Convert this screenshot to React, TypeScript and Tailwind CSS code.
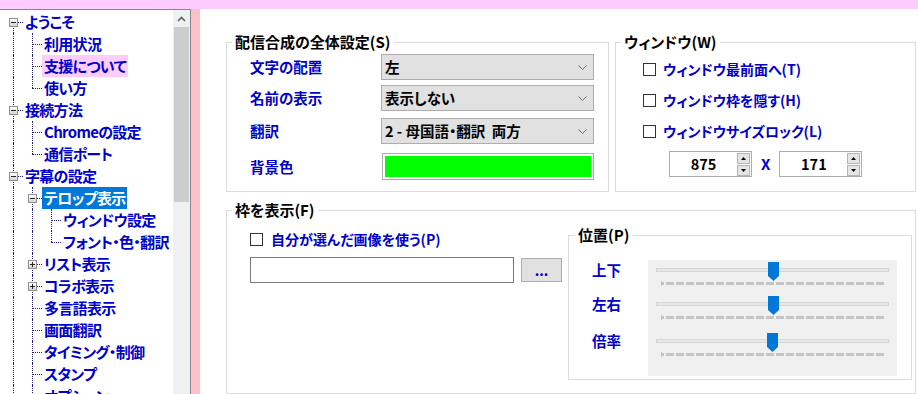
import React from "react";

type Seg = "I" | "T" | "L" | "F";
type Row = { label: string; cols: Seg[]; box?: "-" | "+"; sel?: boolean; pink?: boolean };

const rows: Row[] = [
  { label: "ようこそ", cols: ["F"], box: "-" },
  { label: "利用状況", cols: ["I", "T"] },
  { label: "支援について", cols: ["I", "T"], pink: true },
  { label: "使い方", cols: ["I", "L"] },
  { label: "接続方法", cols: ["T"], box: "-" },
  { label: "Chromeの設定", cols: ["I", "T"] },
  { label: "通信ポート", cols: ["I", "L"] },
  { label: "字幕の設定", cols: ["T"], box: "-" },
  { label: "テロップ表示", cols: ["I", "T"], box: "-", sel: true },
  { label: "ウィンドウ設定", cols: ["I", "I", "T"] },
  { label: "フォント・色・翻訳", cols: ["I", "I", "L"] },
  { label: "リスト表示", cols: ["I", "T"], box: "+" },
  { label: "コラボ表示", cols: ["I", "T"], box: "+" },
  { label: "多言語表示", cols: ["I", "T"] },
  { label: "画面翻訳", cols: ["I", "T"] },
  { label: "タイミング・制御", cols: ["I", "T"] },
  { label: "スタンプ", cols: ["I", "T"] },
  { label: "オプション", cols: ["I", "T"] },
];

function Cell({ seg, box }: { seg: Seg; box?: "-" | "+" }) {
  return (
    <div className="relative w-[19px] h-[22px] shrink-0">
      {(seg === "I" || seg === "T") && (
        <div className="absolute left-[9px] top-0 h-[22px] border-l border-dotted border-[#1c1c7a]" />
      )}
      {seg === "L" && (
        <div className="absolute left-[9px] top-0 h-[11px] border-l border-dotted border-[#1c1c7a]" />
      )}
      {seg === "F" && (
        <div className="absolute left-[9px] top-[11px] h-[11px] border-l border-dotted border-[#1c1c7a]" />
      )}
      {seg !== "I" && (
        <div className="absolute left-[9px] right-0 top-[11px] border-t border-dotted border-[#1c1c7a]" />
      )}
      {box && (
        <div className="absolute left-[5px] top-[7px] w-[9px] h-[9px] border border-[#8f8f8f] bg-linear-to-b from-white to-[#d4d4d4]">
          <div className="absolute left-[1px] top-[3px] w-[5px] h-[1px] bg-[#222]" />
          {box === "+" && <div className="absolute left-[3px] top-[1px] w-[1px] h-[5px] bg-[#222]" />}
        </div>
      )}
    </div>
  );
}

function Tree() {
  return (
    <div className="w-[191px] shrink-0 border-t border-r border-[#828790] flex bg-white">
      <div className="flex-1 overflow-hidden pt-[1px] pl-[4px]">
        {rows.map((r, i) => (
          <div key={i} className="flex h-[22px] items-center">
            {r.cols.map((s, j) => (
              <Cell key={j} seg={s} box={j === r.cols.length - 1 ? r.box : undefined} />
            ))}
            <div
              className={
                "px-[2px] h-[22px] leading-[22px] whitespace-nowrap text-[15px] tracking-[-0.7px] font-bold " +
                (r.sel
                  ? "bg-[#0078d7] text-white"
                  : r.pink
                  ? "bg-[#ffccff] text-[#0000c8]"
                  : "text-[#0000c8]")
              }
            >
              {r.label}
            </div>
          </div>
        ))}
      </div>
      <div className="w-[17px] shrink-0 bg-[#f0f0f0] flex flex-col">
        <div className="h-[17px] flex items-center justify-center">
          <svg width="9" height="6" viewBox="0 0 9 6">
            <polyline points="1,5 4.5,1.5 8,5" fill="none" stroke="#606060" strokeWidth="1.6" />
          </svg>
        </div>
        <div className="mx-[1px] h-[175px] bg-[#cdcdcd]" />
      </div>
    </div>
  );
}

function Chevron() {
  return (
    <svg width="9" height="5" viewBox="0 0 9 5">
      <polyline points="0.5,0.5 4.5,4.5 8.5,0.5" fill="none" stroke="#707070" strokeWidth="1" />
    </svg>
  );
}

function Combo({ text }: { text: string }) {
  return (
    <div className="w-[213px] h-[26px] bg-[#e1e1e1] border border-[#adadad] flex items-center justify-between pl-[3px] pr-[6px] text-black text-[14.5px] font-bold whitespace-pre">
      <span>{text}</span>
      <Chevron />
    </div>
  );
}

function Check({ label, gap = "gap-[7px]" }: { label: string; gap?: string }) {
  return (
    <div className={"flex items-center h-[20px] " + gap}>
      <div className="w-[13px] h-[13px] border border-[#333] bg-white shrink-0" />
      <span className="text-[#0000c8] text-[14px] font-bold whitespace-nowrap">{label}</span>
    </div>
  );
}

function Spinner({ value }: { value: string }) {
  return (
    <div className="w-[83px] h-[26px] border border-[#adadad] bg-white flex">
      <div className="flex-1 flex items-center justify-center text-black text-[14.5px] font-bold">{value}</div>
      <div className="w-[13px] mr-[1px] mt-[1px] flex flex-col gap-[1px]">
        <div className="h-[11px] bg-[#e5e5e5] border border-[#b5b5b5] flex items-center justify-center">
          <svg width="5" height="3" viewBox="0 0 5 3">
            <polygon points="0,3 2.5,0 5,3" fill="#000" />
          </svg>
        </div>
        <div className="h-[11px] bg-[#e5e5e5] border border-[#b5b5b5] flex items-center justify-center">
          <svg width="5" height="3" viewBox="0 0 5 3">
            <polygon points="0,0 2.5,3 5,0" fill="#000" />
          </svg>
        </div>
      </div>
    </div>
  );
}

function Slider({ tx }: { tx: number }) {
  return (
    <svg width="249" height="34" viewBox="0 0 249 34" className="block">
      <rect x="8.5" y="8.5" width="232" height="3" fill="#e7e7e7" stroke="#d6d6d6" />
      <line x1="13" x2="237" y1="23.5" y2="23.5" stroke="#c4c4c4" strokeWidth="3" strokeDasharray="8 2" strokeDashoffset="5" />
      <rect x="13" y="21" width="1" height="5" fill="#c4c4c4" />
      <path d={`M${tx} 2 h11 v14 l-5.5 5 l-5.5 -5 z`} fill="#0078d7" />
    </svg>
  );
}

function Legend({ text, ml = "ml-[5px]" }: { text: string; ml?: string }) {
  return (
    <legend className={ml + " px-[3px] text-[15px] font-bold leading-[20px] text-black whitespace-nowrap"}>
      {text}
    </legend>
  );
}

const LBL = "text-[#0000c8] text-[14.5px] font-bold";

export default function App() {
  return (
    <div className="w-[918px] h-[394px] overflow-hidden flex flex-col bg-white font-['Noto_Sans_CJK_JP','Noto_Sans',sans-serif] [font-feature-settings:'palt']">
      <div className="h-[9px] shrink-0 bg-[#ffccff]" />
      <div className="flex flex-1 min-h-0">
        <Tree />
        <div className="w-[9px] shrink-0 bg-[#ffc0cb]" />
        <div className="flex-1 bg-white pl-[26px] pr-[2px] pt-[23px] flex flex-col">
          <div className="flex gap-[6px]">
            <fieldset className="w-[383px] h-[160px] border border-[#dcdcdc]">
              <Legend text="配信合成の全体設定(S)" />
              <div className="pl-[23px] pt-[2px] flex flex-col">
                <div className="flex items-center">
                  <div className={"w-[131px] " + LBL}>文字の配置</div>
                  <Combo text="左" />
                </div>
                <div className="flex items-center mt-[5px]">
                  <div className={"w-[131px] " + LBL}>名前の表示</div>
                  <Combo text="表示しない" />
                </div>
                <div className="flex items-center mt-[7px]">
                  <div className={"w-[131px] " + LBL}>翻訳</div>
                  <Combo text="2 - 母国語・翻訳  両方" />
                </div>
                <div className="flex items-center mt-[9px]">
                  <div className={"w-[132px] " + LBL}>背景色</div>
                  <div className="w-[212px] h-[27px] border border-[#adadad] bg-white p-[2px]">
                    <div className="w-full h-full bg-[#00ff00]" />
                  </div>
                </div>
              </div>
            </fieldset>
            <fieldset className="w-[301px] h-[160px] border border-[#dcdcdc]">
              <Legend text="ウィンドウ(W)" />
              <div className="pl-[27px] pt-[7px] flex flex-col gap-[11px]">
                <Check label="ウィンドウ最前面へ(T)" />
                <Check label="ウィンドウ枠を隠す(H)" />
                <Check label="ウィンドウサイズロック(L)" />
              </div>
              <div className="pl-[53px] mt-[10px] flex items-center gap-[9px]">
                <Spinner value="875" />
                <span className="text-[#0000c8] text-[15px] font-bold">X</span>
                <Spinner value="171" />
              </div>
            </fieldset>
          </div>
          <fieldset className="mt-[8px] h-[260px] border border-[#dcdcdc]">
            <Legend text="枠を表示(F)" />
            <div className="flex">
              <div className="w-[341px] pl-[23px] flex flex-col">
                <div className="mt-[9px]">
                  <Check label="自分が選んだ画像を使う(P)" gap="gap-[8px]" />
                </div>
                <div className="mt-[8px] flex items-start gap-[7px]">
                  <div className="w-[264px] h-[26px] border border-[#7a7a7a] bg-white" />
                  <div className="mt-[1px] w-[41px] h-[24px] bg-[#e1e1e1] border border-[#adadad] flex items-center justify-center text-[#0000c8] text-[14px] font-bold leading-none">
                    ...
                  </div>
                </div>
              </div>
              <fieldset className="mt-[5px] w-[344px] border border-[#dcdcdc] pb-[3px]">
                <Legend text="位置(P)" ml="ml-[6px]" />
                <div className="flex pt-[15px]">
                  <div className={"w-[79px] pl-[23px] flex flex-col leading-[20px] " + LBL}>
                    <div>上下</div>
                    <div className="mt-[14px]">左右</div>
                    <div className="mt-[17px]">倍率</div>
                  </div>
                  <div className="w-[249px] h-[116px] bg-[#f0f0f0] flex flex-col">
                    <Slider tx={120} />
                    <Slider tx={120} />
                    <div className="mt-[3px]">
                      <Slider tx={119} />
                    </div>
                  </div>
                </div>
              </fieldset>
            </div>
          </fieldset>
        </div>
      </div>
    </div>
  );
}
